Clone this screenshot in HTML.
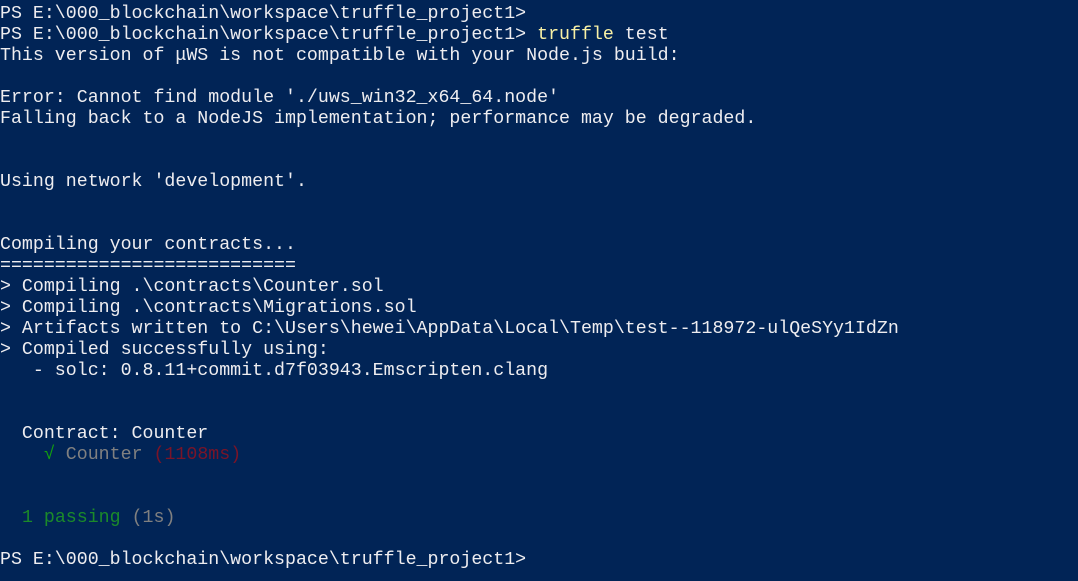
<!DOCTYPE html>
<html><head><meta charset="utf-8"><style>
html,body{margin:0;padding:0;background:#012456;width:1078px;height:581px;overflow:hidden}
pre{margin:0;padding:3.5px 0 0 0;font-family:"Liberation Mono","Noto Sans CJK SC",monospace;font-size:18.27px;line-height:21px;color:#eeedf0;white-space:pre}
.y{color:#f9f1a5}.g{color:#13a10e}.d{color:#1b8a2a}.gr{color:#808080}.r{color:#7a1428}
</style></head><body><pre>PS E:\000_blockchain\workspace\truffle_project1&gt;
PS E:\000_blockchain\workspace\truffle_project1&gt; <span class="y">truffle</span> test
This version of μWS is not compatible with your Node.js build:

Error: Cannot find module './uws_win32_x64_64.node'
Falling back to a NodeJS implementation; performance may be degraded.


Using network 'development'.


Compiling your contracts...
===========================
&gt; Compiling .\contracts\Counter.sol
&gt; Compiling .\contracts\Migrations.sol
&gt; Artifacts written to C:\Users\hewei\AppData\Local\Temp\test--118972-ulQeSYy1IdZn
&gt; Compiled successfully using:
   - solc: 0.8.11+commit.d7f03943.Emscripten.clang


  Contract: Counter
    <span class="g">√</span> <span class="gr">Counter</span> <span class="r">(1108ms)</span>


  <span class="d">1 passing</span> <span class="gr">(1s)</span>

PS E:\000_blockchain\workspace\truffle_project1&gt;</pre></body></html>
